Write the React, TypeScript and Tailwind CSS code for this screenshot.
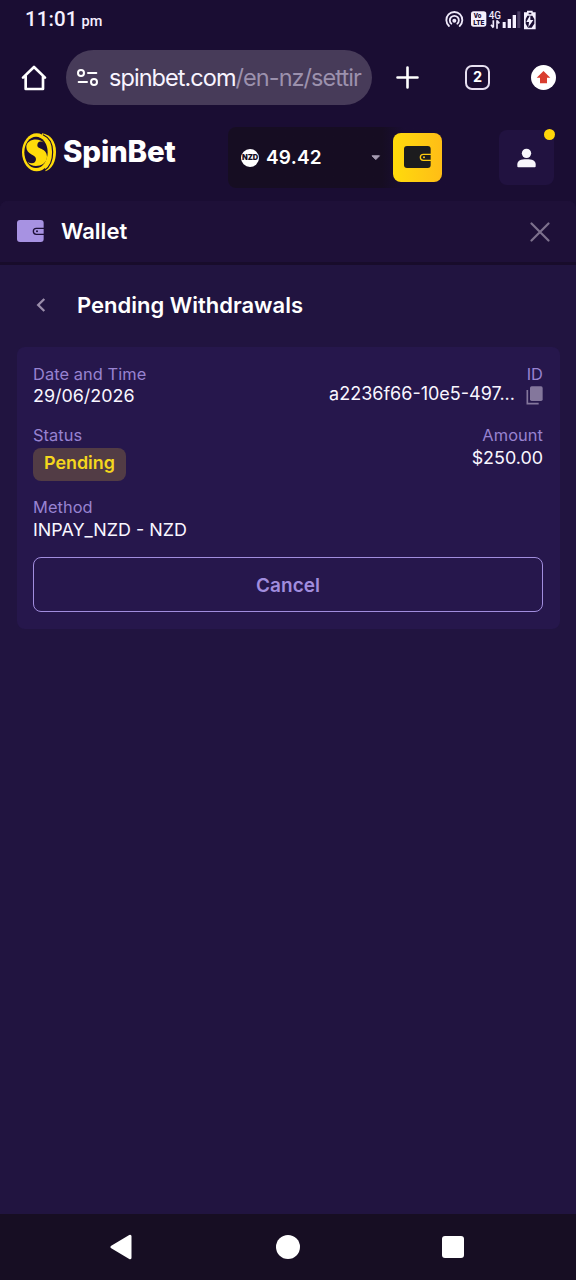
import React from "react";

const roboto = "font-['Roboto',sans-serif]";

function StatusBar() {
  return (
    <div className={`flex h-10 items-center pl-[25px] pr-[39px] text-[#f6f0ff] ${roboto}`}>
      <div className="flex items-baseline pb-0.5">
        <span className="text-[20.5px] font-medium leading-9 tracking-[0.1px]">11:01</span>
        <span className="ml-1 text-[14.5px] font-medium">pm</span>
      </div>
      <svg className="ml-auto" width="92" height="24" viewBox="0 0 276 72">
        <g fill="none" stroke="#eee8fa" strokeWidth="5.500" strokeLinecap="round">
          <path d="M12 54A24 24 0 1 1 44 54" />
          <path d="M19 47A13.500 13.500 0 1 1 37 47" />
        </g>
        <circle cx="28" cy="38" r="6" fill="#eee8fa" />
        <rect x="78" y="10" width="46" height="46" rx="8" fill="#f5f0fc" />
        <g fill="#1a0d33" fontFamily="Roboto, sans-serif" fontWeight="900">
          <text x="86" y="31" fontSize="21" textLength="23" lengthAdjust="spacingAndGlyphs">Vo</text>
          <text x="85" y="52" fontSize="22" textLength="33" lengthAdjust="spacingAndGlyphs">LTE</text>
        </g>
        <text x="131" y="33" fill="#eee8fa" fontFamily="Roboto, sans-serif" fontSize="30" fontWeight="500" textLength="37" lengthAdjust="spacingAndGlyphs">4G</text>
        <path d="M145 37V58M138 50L145 59M156 62V37M163 46L156 38" fill="none" stroke="#eee8fa" strokeWidth="5" />
        <path d="M173 42h9v18h-9zM188 33h10v27h-10zM203 21h10v39h-10z" fill="#f6f0ff" />
        <path d="M217 10h9v50h-9z" fill="#4b3d64" />
        <path d="M246 8h17v5h9v51h-35v-51h9z" fill="#f6f0ff" />
        <path d="M251 14h8v5h-8zM247 23h15l6 10v14l-8 12h-11l-7-12v-14z" fill="#1a0d33" />
        <path d="M256 20L244 42H252L250 58L265 36H256z" fill="#f6f0ff" />
      </svg>
    </div>
  );
}

function BrowserBar() {
  return (
    <div className="flex h-[75px] items-center text-white">
      <svg className="ml-5 mt-0.5 shrink-0" width="28" height="30" viewBox="60 192 84 90" fill="none" stroke="#fff" strokeWidth="8" strokeLinecap="round" strokeLinejoin="round">
        <path d="M69 233L102 201L135 233M77 229V267H129V229" />
      </svg>
      <div className="ml-[18px] flex h-[55px] w-[306px] shrink-0 items-center overflow-hidden rounded-full bg-[#473b59]">
        <svg className="ml-[11px] shrink-0" width="22" height="20" viewBox="231 204 66 60" fill="none" stroke="#fff" strokeWidth="6" strokeLinecap="round">
          <circle cx="243" cy="219" r="9" />
          <path d="M264 219H289M236 246H261" />
          <circle cx="282" cy="246" r="9" />
        </svg>
        <div className="ml-[10px] whitespace-nowrap font-['Inter',sans-serif] text-[23.5px] leading-8 tracking-[-0.95px] text-[#f8f4ff]">
          spinbet.com<span className="text-[#9c91ad]">/en-nz/settir</span>
        </div>
      </div>
      <svg className="ml-6 shrink-0" width="23" height="23" viewBox="0 0 23 23" stroke="#fff" strokeWidth="2.600" strokeLinecap="round">
        <path d="M11.500 1.500V21.500M1.500 11.500H21.500" />
      </svg>
      <div className="ml-[46px] flex h-[25px] w-[25px] shrink-0 items-center justify-center rounded-[7px] border-2 border-[#e6dff0] font-['Inter',sans-serif] text-[14.5px] font-bold leading-none">
        2
      </div>
      <svg className="ml-[41px] shrink-0" width="25" height="25" viewBox="0 0 75 75">
        <circle cx="37.500" cy="37.500" r="37.500" fill="#fff" />
        <path d="M37.500 18L58 38H48V55H27V38H17z" fill="#d93d2f" />
      </svg>
    </div>
  );
}

function WalletGlyph({ body, line }: { body: string; line: string }) {
  return (
    <svg width="28" height="22" viewBox="0 0 84 66" className="shrink-0">
      <rect x="0" y="0" width="80" height="66" rx="9" fill={body} />
      <path d="M82 25H58a9 9 0 0 0 0 18H82" fill="none" stroke={line} strokeWidth="4" />
      <circle cx="60" cy="34" r="3" fill={line} />
    </svg>
  );
}

function SiteHeader() {
  return (
    <div className="flex h-[86px] shrink-0 items-start font-['Inter',sans-serif]">
      <svg className="ml-[22px] mt-[18px] shrink-0" width="35" height="39" viewBox="66 53 105 117">
        <path d="M126 54C151 57 168 79 168 109C168 139 156 161 136 168z" fill="#ffdb0a" />
        <ellipse cx="110" cy="111" rx="44" ry="57" fill="#ffdb0a" />
        <path d="M129 58C147 66 158 85 158 110C158 136 149 155 134 165" fill="none" stroke="#1a0d33" strokeWidth="3.500" />
        <ellipse cx="108" cy="111" rx="35" ry="47" fill="#1a0d33" />
        <path d="M132 83C119 65 79 70 79 95C79 119 108 117 108 131C108 144 95 148 83 140C96 161 141 153 141 124C141 98 112 103 112 90C112 79 122 75 132 83z" fill="#ffdb0a" />
      </svg>
      <span className="ml-[6px] mt-[16px] w-[115px] whitespace-nowrap text-[29.5px] font-extrabold leading-10 tracking-[-0.2px] text-white">SpinBet</span>
      <div className="ml-[50px] mt-[12px] flex h-[61px] w-[220px] items-center rounded-lg bg-gradient-to-r from-[#160d22] from-70% to-[#1a0d33] to-80% pl-[13px]">
        <div className="flex h-[18px] w-[18px] items-center justify-center rounded-full bg-white text-[7.5px] font-black leading-none tracking-[-0.2px] text-[#160d22]">
          NZD
        </div>
        <span className="ml-[7px] w-[56px] text-[19px] font-semibold leading-6 tracking-[0.2px] text-white">49.42</span>
        <svg className="ml-[49px]" width="10" height="6" viewBox="0 0 10 6">
          <path d="M1 .8H8.500L4.800 4.600z" fill="#a79db3" stroke="#a79db3" strokeLinejoin="round" />
        </svg>
        <div className="ml-[12px] flex h-[49px] w-[49px] items-center justify-center rounded-lg bg-gradient-to-r from-[#ffdb0b] to-[#ffbd16] pb-px pl-px">
          <WalletGlyph body="#1c1c1e" line="#ffcb10" />
        </div>
      </div>
      <div className="relative ml-[51px] mt-[15px] flex h-[55px] w-[55px] items-center justify-center rounded-lg bg-[#211240]">
        <svg width="19" height="20" viewBox="0 0 57 60" fill="#f8f6fc">
          <circle cx="28.500" cy="16" r="14" />
          <path d="M1 55V49C1 38 12 34 28.500 34S56 38 56 49V55Q56 58 53 58H4Q1 58 1 55z" />
        </svg>
        <span className="absolute -top-px right-[-1px] h-[11px] w-[11px] rounded-full bg-[#ffd60a]" />
      </div>
    </div>
  );
}

function Field({ label, right, children }: { label: string; right?: boolean; children: React.ReactNode }) {
  return (
    <div className={`flex flex-col ${right ? "items-end" : "items-start"}`}>
      <span className="text-[16.4px] leading-[22px] tracking-[0.07px] text-[#9883d1]">{label}</span>
      {children}
    </div>
  );
}

function WithdrawalCard() {
  return (
    <div className="mx-4 ml-[17px] flex h-[282px] flex-col rounded-lg bg-[#26174c] px-4 pr-[17px] pt-4 text-[17.9px] leading-[22px] text-[#f9f6ff]">
      <div className="flex h-[61px] justify-between">
        <Field label="Date and Time">
          <span>29/06/2026</span>
        </Field>
        <Field label="ID" right>
          <span className="flex h-[19px] items-center">
            <span className="pb-px text-[18px] leading-[18px]">a2236f66-10e5-497...</span>
            <svg className="ml-[11px] mt-px" width="17" height="19" viewBox="0 0 51 57">
              <rect x="12" y="1" width="38" height="44" rx="5" fill="#84779c" />
              <path d="M4 12V53H38" fill="none" stroke="#84779c" strokeWidth="5" />
            </svg>
          </span>
        </Field>
      </div>
      <div className="flex h-[72px] justify-between">
        <Field label="Status">
          <span className="mt-0.5 flex h-[33px] items-center rounded-lg bg-[#523c45] px-[11px] pb-[3px] text-[17.9px] font-semibold text-[#f5d71d]">Pending</span>
        </Field>
        <Field label="Amount" right>
          <span className="mt-px">$250.00</span>
        </Field>
      </div>
      <Field label="Method">
        <span className="mt-px">INPAY_NZD - NZD</span>
      </Field>
      <button className="mt-4 flex h-[55px] shrink-0 items-center justify-center rounded-lg border border-[#a18dde] pt-0.5 text-[19px] font-semibold text-[#a18dde]">
        Cancel
      </button>
    </div>
  );
}

export default function App() {
  return (
    <div className="flex h-[1280px] w-[576px] flex-col overflow-hidden bg-[#1a0d33]">
      <StatusBar />
      <BrowserBar />
      <SiteHeader />
      <main className="flex flex-1 flex-col overflow-hidden rounded-t-lg bg-[#211440] font-['Inter',sans-serif] text-white">
        <div className="flex h-[64px] items-center border-b-[3px] border-[#180c2b] bg-[#1e1038] pb-px pl-[17px] pr-[26px]">
          <WalletGlyph body="#a792e2" line="#1e1038" />
          <h1 className="ml-4 text-[22px] font-semibold leading-7">Wallet</h1>
          <svg className="ml-auto mt-px" width="20" height="20" viewBox="0 0 20 20" stroke="#7d718d" strokeWidth="2.200" strokeLinecap="round">
            <path d="M1.500 1.500L18.500 18.500M18.500 1.500L1.500 18.500" />
          </svg>
        </div>
        <div className="flex h-[82px] items-center pb-0.5">
          <svg className="ml-[36px]" width="10" height="14" viewBox="0 0 10 14" fill="none" stroke="#9a8daa" strokeWidth="2.300">
            <path d="M8.300 1L2.200 7L8.300 13" />
          </svg>
          <h2 className="ml-[31px] text-[22px] font-semibold leading-7">Pending Withdrawals</h2>
        </div>
        <WithdrawalCard />
      </main>
      <nav className="flex h-[66px] shrink-0 items-center bg-[#170e23]">
        <svg className="ml-[110px]" width="22" height="26" viewBox="0 0 22 26" fill="#fff" stroke="#fff" strokeWidth="3" strokeLinejoin="round">
          <path d="M20 2.300V23.700L2 13z" />
        </svg>
        <svg className="ml-[144px]" width="24" height="26" viewBox="0 0 24 26">
          <ellipse cx="12" cy="13" rx="12" ry="12" fill="#fff" />
        </svg>
        <span className="ml-[142px] h-[22px] w-[22px] rounded-[3px] bg-white" />
      </nav>
    </div>
  );
}
